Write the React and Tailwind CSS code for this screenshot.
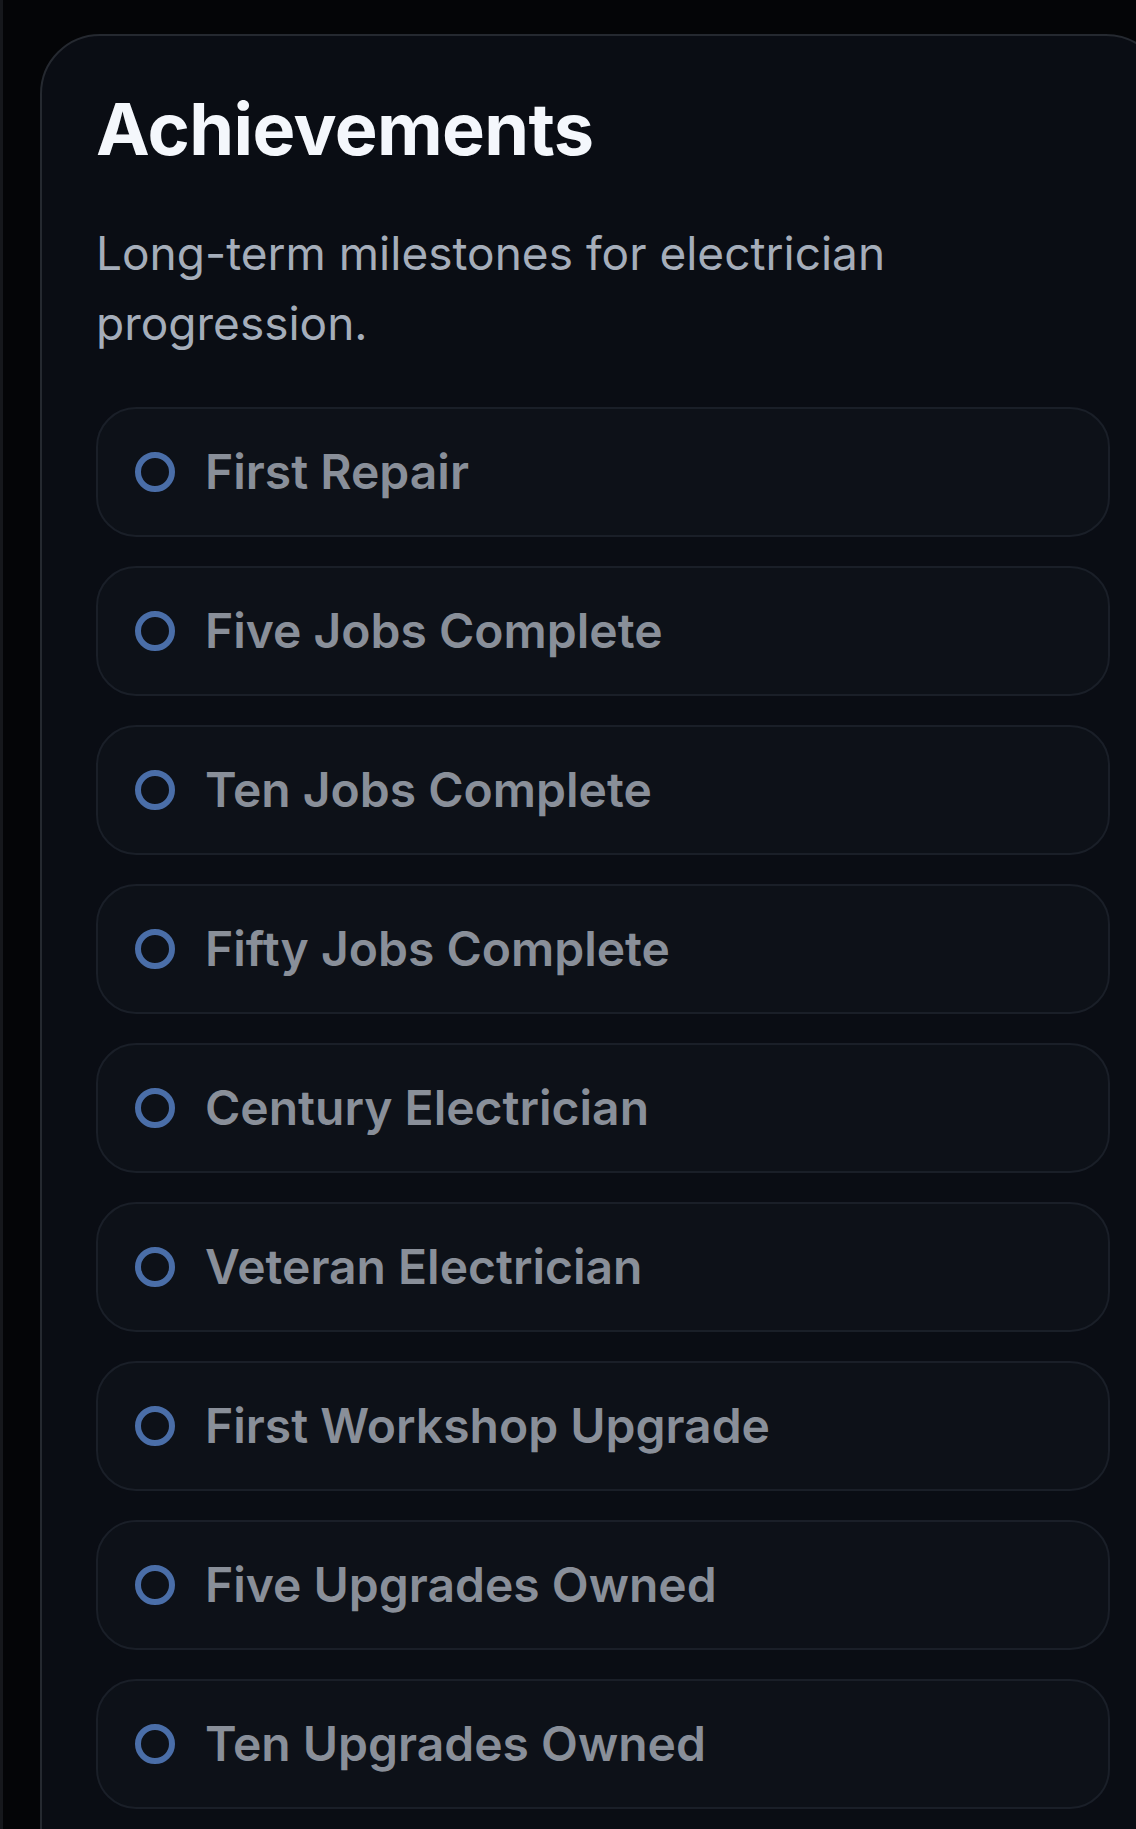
export default function App() {
  const items = [
    "First Repair",
    "Five Jobs Complete",
    "Ten Jobs Complete",
    "Fifty Jobs Complete",
    "Century Electrician",
    "Veteran Electrician",
    "First Workshop Upgrade",
    "Five Upgrades Owned",
    "Ten Upgrades Owned",
  ];
  return (
    <div className="min-h-screen h-[1829px] w-full overflow-hidden bg-[#040507] flex font-['Inter','Noto_Sans',sans-serif]">
      <div className="w-[3px] shrink-0 bg-[#16181c]" />
      <div className="shrink-0 pl-[37px] pt-[34px]">
        <div className="w-[1126px] rounded-[60px] border-2 border-[#252930] bg-[#0a0d14] px-[54px] pt-[57px] pb-[120px]">
          <h1 className="text-[72px] leading-[72px] font-bold text-[#f4f7fc] tracking-[-0.6px]">
            Achievements
          </h1>
          <p className="mt-[53px] max-w-[900px] text-[46px] leading-[70px] text-[#a5adba]">
            Long-term milestones for electrician progression.
          </p>
          <ul className="mt-[49px] flex flex-col gap-[29px]">
            {items.map((t) => (
              <li
                key={t}
                className="flex h-[130px] items-center gap-[30px] rounded-[40px] border-2 border-[#1a1f28] bg-[#0d1118] pl-[37px]"
              >
                <span className="h-[40px] w-[40px] shrink-0 rounded-full border-[6px] border-[#4a6ea8]" />
                <span className="text-[48px] font-semibold text-[#898f99]">{t}</span>
              </li>
            ))}
          </ul>
        </div>
      </div>
    </div>
  );
}
